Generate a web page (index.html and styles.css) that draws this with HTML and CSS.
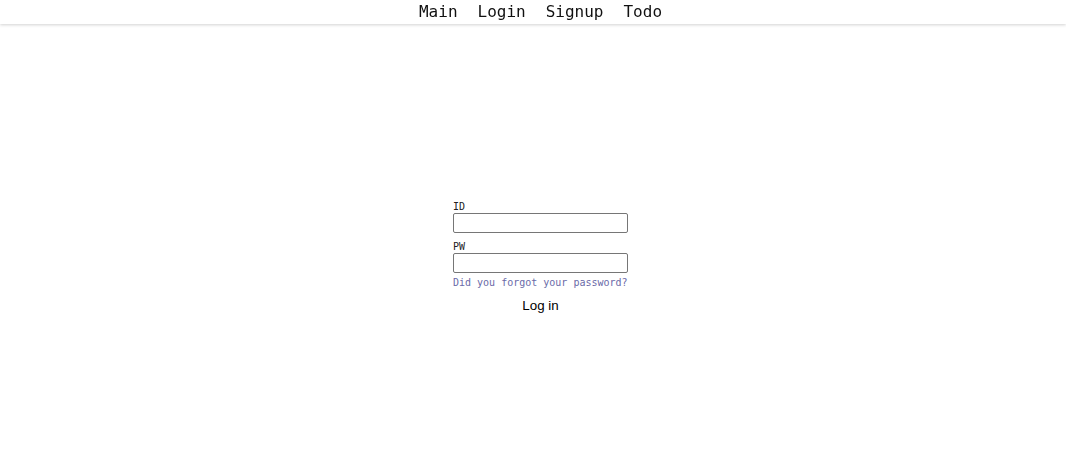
FILE: index.html
```html
<!DOCTYPE html>
<html>
<head>
<meta charset="utf-8">
<link rel="stylesheet" href="styles.css">
</head>
<body>
<header class="topbar">
  <nav class="nav">
    <a class="nav-link" href="#">Main</a>
    <a class="nav-link" href="#">Login</a>
    <a class="nav-link" href="#">Signup</a>
    <a class="nav-link" href="#">Todo</a>
  </nav>
</header>
<main class="page">
  <form class="login-form">
    <label class="field-label" for="id">ID</label>
    <input class="field-input" id="id" type="text">
    <label class="field-label" for="pw">PW</label>
    <input class="field-input" id="pw" type="password">
    <a class="forgot" href="#">Did you forgot your password?</a>
    <button class="login-btn" type="button">Log in</button>
  </form>
</main>
</body>
</html>
```
FILE: styles.css
```css
html, body {
  margin: 0;
  padding: 0;
  background: #fff;
}
body {
  font-family: "DejaVu Sans Mono", monospace;
}
.topbar {
  position: fixed;
  top: 0;
  left: 0;
  right: 0;
  height: 24px;
  background: #fff;
  box-shadow: 0 1px 3px rgba(0, 0, 0, 0.18);
}
.nav {
  display: flex;
  justify-content: center;
  gap: 20px;
  padding-left: 15px;
  height: 24px;
  align-items: center;
}
.nav-link {
  font-family: "DejaVu Sans Mono", monospace;
  font-size: 16px;
  color: #111;
  text-decoration: none;
  line-height: 20px;
}
.page {
  display: flex;
  justify-content: center;
  padding-left: 15px;
  padding-top: 200px;
}
.login-form {
  display: flex;
  flex-direction: column;
  width: 175px;
}
.field-label {
  font-family: "DejaVu Sans Mono", monospace;
  font-size: 10px;
  line-height: 12px;
  padding-top: 1px;
  color: #222;
}
.field-input {
  box-sizing: border-box;
  width: 175px;
  height: 20px;
  margin: 0 0 7px 0;
  border: 1px solid #767676;
  border-radius: 2px;
  padding: 1px 2px;
}
.forgot {
  font-family: "DejaVu Sans Mono", monospace;
  font-size: 10px;
  line-height: 12px;
  color: #6a6aa8;
  text-decoration: none;
  margin-top: -3px;
}
.login-btn {
  align-self: center;
  margin-top: 7px;
  background: none;
  border: none;
  font-family: "Liberation Sans", Arial, sans-serif;
  font-size: 13.33px;
  color: #000;
  padding: 2px 6px;
}
```
